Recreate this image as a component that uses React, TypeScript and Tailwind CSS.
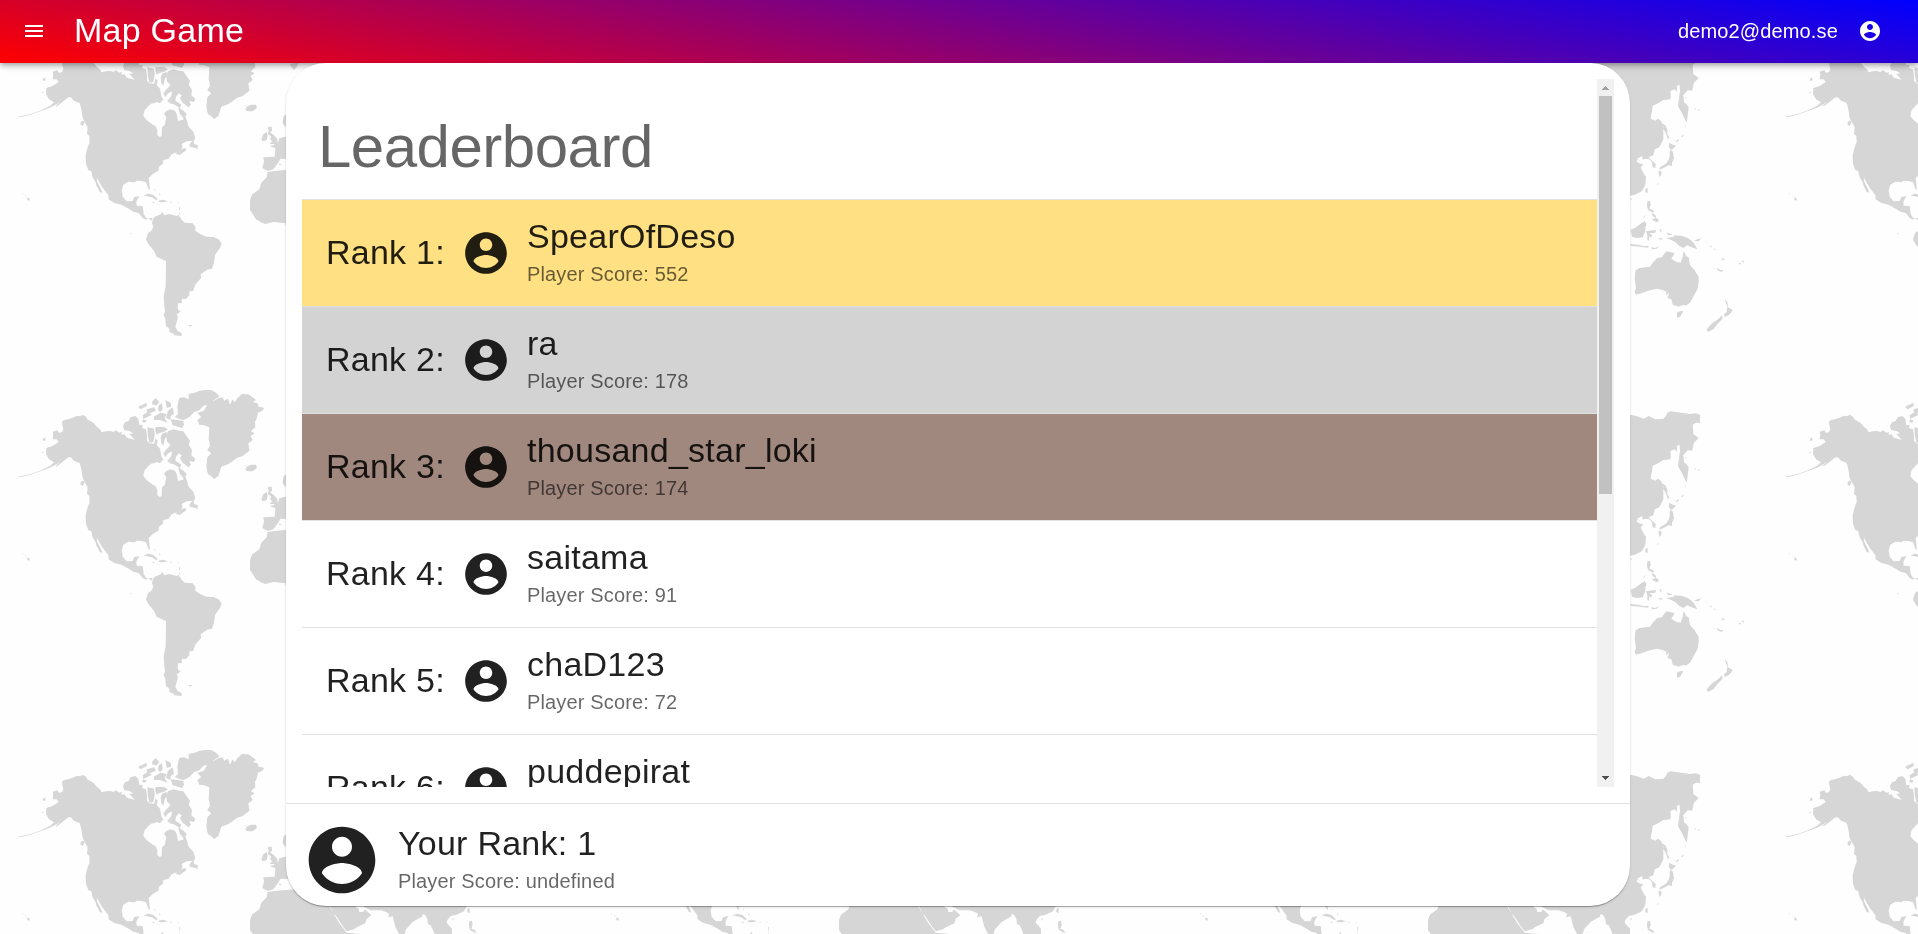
import React from "react";

const LAND = [
  // North and Central America
  "M186 155L192 150 205 148 218 143 232 137 240 139 248 134 258 140 262 148 280 158 292 172 300 178 305 187 318 184 330 183 340 186 348 181 358 188 366 186 364 194 374 193 380 203 404 209 396 200 388 192 400 190 388 183 372 180 369 168 375 157 386 153 392 142 406 138 415 147 418 165 428 165 426 174 438 178 441 196 441 212 448 220 462 221 467 205 473 213 470 225 480 236 485 262 490 268 480 280 470 276 462 280 452 281 434 300 430 318 442 332 455 342 468 350 472 362 472 376 479 381 485 378 486 352 494 345 499 322 492 312 500 302 512 298 525 302 530 312 534 332 548 330 556 320 560 330 566 350 580 365 586 384 582 392 560 394 545 402 532 404 545 402 548 410 542 418 555 414 560 420 540 434 526 432 532 426 515 433 505 447 490 450 488 462 477 470 475 482 458 492 446 504 450 540 446 538 438 517 424 513 410 512 404 517 385 515 370 524 365 542 368 560 380 574 398 573 402 562 418 558 409 575 410 587 428 588 431 612 438 624 458 624 455 632 445 624 438 629 428 624 416 609 400 605 386 596 366 585 342 578 326 568 325 556 306 530 290 502 292 516 302 535 307 548 299 545 290 528 286 515 278 502 274 484 265 480 258 462 257 435 262 415 269 396 268 377 261 372 263 352 248 324 244 297 239 279 222 272 213 262 205 262 192 272 172 288 166 288 182 275 150 293 116 305 86 316 60 322 54 320 84 314 120 302 150 288 162 277 147 268 138 252 139 234 158 228 176 216 170 208 158 208 160 194 158 185 172 181 176 188 186 187 190 178 187 165Z",
  // South America
  "M458 630L464 620 480 614 488 606 492 616 508 612 530 618 535 614 546 630 554 638 578 640 586 650 586 662 600 672 618 680 640 681 656 688 665 701 660 714 645 734 642 758 636 777 624 778 602 793 604 803 585 825 580 842 568 844 568 856 558 867 545 866 546 879 534 880 533 897 542 905 530 913 534 922 526 950 532 962 546 970 544 978 524 976 519 970 508 967 508 956 498 948 496 926 491 915 495 905 493 888 491 860 497 828 498 754 470 740 462 722 445 702 438 688 444 670 454 662 460 650 456 640Z",
  // Greenland and Ellesmere
  "M592 128L612 122 620 108 618 100 640 94 655 85 668 82 672 92 684 86 690 104 698 88 704 97 712 85 726 72 745 73 758 82 768 90 758 96 772 100 776 110 792 113 788 122 774 128 770 146 765 155 766 172 752 184 764 190 752 198 758 210 745 220 748 242 728 258 710 264 686 282 664 290 655 318 643 327 632 318 624 312 619 290 622 262 634 250 622 240 630 228 626 206 628 172 612 166 598 164 592 150 604 142Z",
  "M538 84L552 82 566 88 566 72 584 68 600 62 616 60 634 60 650 70 658 80 646 88 630 100 610 108 596 122 582 126 568 142 550 150 536 146 524 140 534 132 532 108Z",
  // Canadian archipelago
  "M414 110L440 98 440 108 422 118ZM440 118L462 112 468 122 452 128 442 132ZM456 96L466 84 478 96 470 106 458 104ZM428 136L444 126 456 134 440 142 430 146ZM476 106L486 100 488 118 480 126 474 120ZM496 90L512 98 514 110 500 114ZM504 122L518 112 522 132 512 138 512 150 498 144ZM512 148L550 152 552 164 546 174 518 166ZM462 140L482 128 500 132 494 144 502 158 480 150 462 150ZM430 148L440 152 436 158 426 156ZM442 172L462 176 464 194 460 216 448 218 444 200ZM466 172L490 170 504 178 492 186 480 188 470 194 466 184ZM488 190L500 186 500 196 494 208 490 228 484 218 482 200Z",
  "M504 184L520 178 538 182 550 184 562 202 570 212 566 224 576 240 574 256 586 266 582 276 568 272 572 284 566 292 548 278 540 264 546 256 536 250 528 260 526 272 544 284 540 294 524 284 510 280 502 272 514 258 516 244 504 250 496 262 490 250 500 238 512 224 502 216 498 198ZM528 232L538 236 534 246 526 242Z",
  "M534 292L548 300 560 312 552 328 540 312ZM568 404L580 388 582 402 594 406 592 416 578 412 570 410ZM242 336L250 332 254 336 248 348 242 344ZM128 206L136 203 136 212 130 212ZM125 246L132 246 130 250Z",
  "M734 284L742 290 752 284 768 284 771 294 758 304 744 304 736 300 740 292Z",
  // Caribbean, Hawaii and southern islands
  "M430 556L445 551 460 555 474 568 468 570 456 562 440 558ZM476 572L488 569 504 574 490 577 476 576ZM456 575L466 576 460 579ZM511 575L517 576 512 579ZM82 562L90 566 88 572 82 570ZM66 550L70 552 66 553ZM76 556L80 558 76 559ZM532 577L536 578 533 580ZM537 592L539 590 540 600 538 604ZM538 608L540 610 536 618ZM462 536L466 540 463 541ZM477 550L482 556 477 554ZM388 669L396 670 394 672ZM564 946L578 945 572 950Z",
  // Britain and Ireland
  "M804 350L815 350 816 362 810 366 822 376 832 388 832 398 820 402 808 402 818 394 810 388 814 380 804 372 806 362ZM784 388L790 372 800 366 803 376 800 390 788 394ZM870 162L882 160 896 158 890 172 882 180 874 172ZM836 462L846 461 840 466Z",
  // Europe and Asia
  "M857 380L838 385 836 394 820 406 808 408 826 414 824 440 790 442 792 455 787 474 803 483 820 478 832 462 842 446 870 448 900 478 905 455 930 490 950 470 985 500 990 528 1000 550 1010 560 1028 588 1040 604 1062 598 1073 590 1096 580 1100 566 1114 556 1104 546 1094 538 1090 546 1078 546 1076 536 1065 530 1078 522 1098 534 1112 541 1142 541 1158 546 1168 552 1164 562 1178 559 1186 590 1200 618 1212 618 1218 598 1238 576 1254 566 1266 560 1268 552 1275 554 1282 566 1284 582 1292 586 1299 600 1306 620 1316 612 1332 630 1356 616 1356 596 1340 578 1342 570 1352 558 1370 554 1392 544 1402 524 1404 500 1396 490 1388 472 1396 464 1376 456 1380 444 1394 438 1392 448 1404 446 1414 448 1422 456 1424 472 1432 474 1433 462 1420 450 1412 442 1426 436 1430 418 1444 412 1456 388 1456 352 1450 334 1440 326 1432 332 1418 326 1424 288 1440 280 1456 270 1478 268 1478 242 1490 238 1496 246 1498 226 1505 226 1506 244 1500 288 1510 306 1526 338 1530 310 1532 290 1518 276 1516 256 1530 240 1542 242 1548 218 1562 204 1546 192 1544 164 1554 158 1566 160 1566 134 1552 130 1536 132 1478 124 1468 128 1464 138 1456 146 1432 148 1412 138 1398 146 1372 137 1355 134 1300 120 1230 90 1150 130 1080 140 1000 190 950 180 900 230 880 290 850 320 848 340 857 352 880 330 900 360Z",
  // Africa
  "M803 486L830 482 857 480 910 476 920 495 975 506 992 536 1018 580 1040 608 1080 612 1050 665 1010 720 1010 800 960 870 900 880 870 780 872 700 855 640 820 636 796 642 786 638 768 628 758 612 750 600 750 570 756 554 778 538 784 518 800 502Z",
  // Sakhalin, Japan and Taiwan
  "M1452 340L1462 346 1468 360 1468 372 1474 382 1470 388 1464 370 1456 356ZM1474 398L1484 404 1494 406 1488 414 1480 420 1472 412ZM1476 420L1484 424 1488 444 1482 458 1482 468 1472 466 1456 474 1444 480 1446 472 1466 460 1474 444ZM1442 482L1450 484 1450 494 1444 500 1442 490ZM1402 538L1410 534 1408 550 1402 546ZM1492 396L1500 388 1504 386 1498 396ZM1508 380L1518 372 1514 380ZM1519 350L1524 344 1522 350ZM1548 295L1554 296 1552 300ZM1560 298L1566 300 1560 302ZM1522 262L1526 260 1524 266ZM1438 522L1442 518 1440 526ZM1357 565L1362 566 1358 572Z",
  // Philippines and Indonesia
  "M1408 574L1416 572 1418 584 1414 596 1424 600 1430 608 1420 606 1410 600 1407 588ZM1420 610L1428 612 1434 618 1434 624 1424 618ZM1422 628L1434 624 1442 628 1440 636 1430 634ZM1396 622L1404 614 1398 624ZM1358 660L1374 652 1390 640 1400 634 1406 642 1402 652 1402 664 1394 682 1376 684 1362 680ZM1404 664L1434 660 1432 668 1414 670 1422 676 1420 684 1414 678 1412 692 1408 690 1408 674ZM1358 702L1380 704 1396 708 1412 708 1410 713 1388 710 1358 708ZM1420 712L1432 714 1444 708 1436 716 1422 718ZM1444 660L1450 658 1450 668ZM1440 684L1456 686 1448 690ZM1466 668L1482 672 1480 676 1468 674Z",
  "M1464 684L1480 682 1488 680 1490 676 1512 678 1530 684 1540 692 1548 700 1558 718 1540 712 1528 706 1516 714 1504 708 1494 698 1480 690ZM1548 692L1558 688 1570 684 1562 694ZM1578 696L1590 702 1584 700ZM1594 706L1604 712 1598 712ZM1606 714L1614 720 1610 720ZM1630 744L1640 748 1634 752ZM1616 774L1626 780 1636 780 1630 786 1618 780ZM1682 760L1690 758 1686 764ZM1690 754L1698 752 1696 758Z",
  // Australia and New Zealand
  "M1517 722L1524 738 1532 742 1536 766 1548 778 1562 800 1562 818 1558 838 1546 860 1536 878 1526 886 1512 886 1502 890 1484 884 1480 868 1468 864 1474 848 1464 856 1466 846 1454 840 1436 836 1410 842 1390 850 1374 854 1370 846 1374 834 1370 808 1372 782 1384 774 1416 770 1424 758 1438 744 1452 742 1458 732 1466 724 1490 730 1480 746 1496 756 1508 758 1514 740ZM1498 906L1508 904 1516 902 1508 918 1500 924 1496 918ZM1640 868L1648 876 1650 892 1664 900 1656 912 1640 922 1638 912 1646 906 1648 890ZM1632 916L1634 926 1618 942 1606 958 1590 966 1586 958 1600 942 1620 928Z",
].join("");

function MapBackdrop() {
  return (
    <svg className="fixed inset-0 h-full w-full" aria-hidden="true">
      <defs>
        <pattern id="world" width="589" height="360" patternUnits="userSpaceOnUse">
          <rect width="589" height="360" fill="#fefefe" />
          <path d={LAND} transform="translate(0 10) scale(0.33333)" fill="#d6d6d6" />
        </pattern>
      </defs>
      <rect width="100%" height="100%" fill="url(#world)" />
    </svg>
  );
}

function AccountCircle({ className }: { className: string }) {
  return (
    <svg viewBox="0 0 24 24" fill="currentColor" className={className} aria-hidden="true">
      <path d="M12 2C6.48 2 2 6.48 2 12s4.48 10 10 10 10-4.48 10-10S17.52 2 12 2zm0 3c1.66 0 3 1.34 3 3s-1.34 3-3 3-3-1.34-3-3 1.34-3 3-3zm0 14.200c-2.500 0-4.710-1.280-6-3.220.030-1.990 4-3.080 6-3.080 1.990 0 5.970 1.090 6 3.080-1.290 1.940-3.500 3.220-6 3.220z" />
    </svg>
  );
}

const players = [
  { name: "SpearOfDeso", score: 552, tone: "bg-[#ffe082]" },
  { name: "ra", score: 178, tone: "bg-[#d3d3d3]" },
  { name: "thousand_star_loki", score: 174, tone: "bg-[#a1887f]" },
  { name: "saitama", score: 91, tone: "bg-white" },
  { name: "chaD123", score: 72, tone: "bg-white" },
  { name: "puddepirat", score: 65, tone: "bg-white" },
];

function PlayerText({ title, score }: { title: string; score: string | number }) {
  return (
    <div className="flex flex-col">
      <span className="pb-0.5 text-[34px] leading-10 tracking-[0.00735em]">{title}</span>
      <span className="text-xl leading-8 tracking-[0.0075em] text-black/60">Player Score: {score}</span>
    </div>
  );
}

function ScrollTrack() {
  return (
    <div className="flex w-[17px] shrink-0 flex-col items-center bg-[#f1f1f1]">
      <svg viewBox="0 0 17 17" className="h-[17px] w-[17px] shrink-0" shapeRendering="crispEdges" aria-hidden="true">
        <path d="M8 7h1v1h1v1h1v1h1v1H5v-1h1V9h1V8h1z" fill="#a3a3a3" />
      </svg>
      <div className="h-[398px] w-[13px] bg-[#c1c1c1]" />
      <svg viewBox="0 0 17 17" className="mt-auto h-[17px] w-[17px] shrink-0" shapeRendering="crispEdges" aria-hidden="true">
        <path d="M5 6h7v1h-1v1h-1v1H9v1H8V9H7V8H6V7H5z" fill="#505050" />
      </svg>
    </div>
  );
}

export default function App() {
  return (
    <div className="flex h-screen flex-col overflow-hidden bg-white font-['Liberation_Sans',Arial,sans-serif] text-black/[0.87]">
      <MapBackdrop />
      <header className="relative flex h-[63px] shrink-0 items-center bg-[linear-gradient(10deg,#ff0000,#0000ff)] pr-9 pb-px pl-[22px] text-white shadow-[0_2px_4px_-1px_rgba(0,0,0,0.2),0_4px_5px_0_rgba(0,0,0,0.14),0_1px_10px_0_rgba(0,0,0,0.12)]">
        <svg viewBox="0 0 24 24" fill="currentColor" className="h-6 w-6" aria-hidden="true">
          <path d="M3 18h18v-2H3v2zm0-5h18v-2H3v2zm0-7v2h18V6H3z" />
        </svg>
        <h1 className="ml-7 grow pb-0.5 text-[34px] leading-[42px] tracking-[0.00735em]">Map Game</h1>
        <span className="mr-5 text-xl leading-8 tracking-[0.0075em]">demo2@demo.se</span>
        <AccountCircle className="h-6 w-6" />
      </header>

      <main className="relative ml-[286px] flex h-[843px] w-[1344px] flex-col overflow-hidden rounded-[40px] bg-white shadow-[0_2px_1px_-1px_rgba(0,0,0,0.2),0_1px_1px_0_rgba(0,0,0,0.14),0_1px_3px_0_rgba(0,0,0,0.12)]">
        <div className="m-4 flex h-[708px] shrink-0 overflow-hidden">
          <div className="flex grow flex-col">
            <h2 className="flex h-[120px] shrink-0 items-center px-4 pt-4 text-[60px] leading-[72px] tracking-[-0.00833em] text-black/60">
              Leaderboard
            </h2>
            <ul>
              {players.map((player, i) => (
                <li
                  key={player.name}
                  className={`flex h-[107px] items-center border-t border-[#e0e0e0] pl-6 ${player.tone}`}
                >
                  <span className="w-[119px] pb-0.5 text-[34px] leading-[42px] tracking-[0.00735em]">
                    Rank {i + 1}:
                  </span>
                  <AccountCircle className="mx-4 h-[50px] w-[50px] shrink-0" />
                  <PlayerText title={player.name} score={player.score} />
                </li>
              ))}
            </ul>
          </div>
          <ScrollTrack />
        </div>
        <footer className="flex grow items-center gap-4 border-t border-[#e0e0e0] px-4 pt-2.5">
          <AccountCircle className="h-20 w-20 shrink-0" />
          <PlayerText title="Your Rank: 1" score="undefined" />
        </footer>
      </main>
    </div>
  );
}
